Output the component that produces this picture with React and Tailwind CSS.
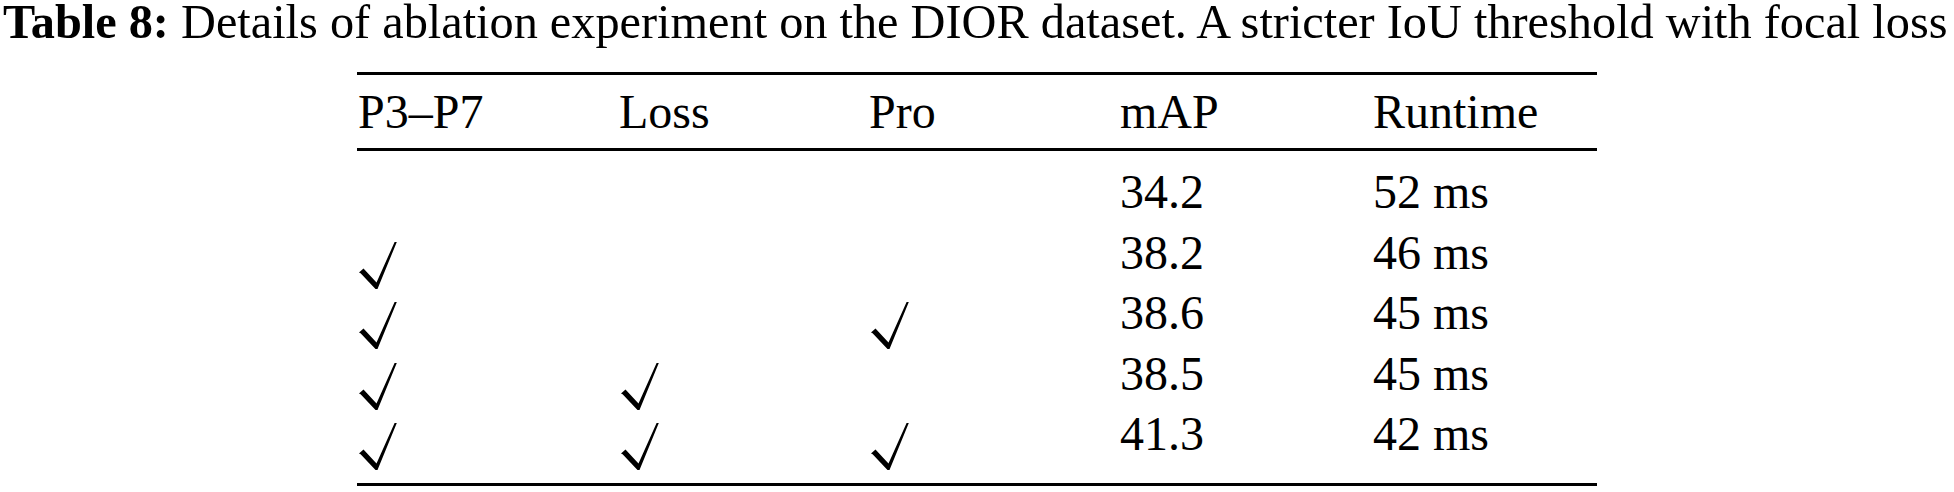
import React from 'react';

const rows = [
  { p37: false, loss: false, pro: false, map: '34.2', runtime: '52 ms' },
  { p37: true, loss: false, pro: false, map: '38.2', runtime: '46 ms' },
  { p37: true, loss: false, pro: true, map: '38.6', runtime: '45 ms' },
  { p37: true, loss: true, pro: false, map: '38.5', runtime: '45 ms' },
  { p37: true, loss: true, pro: true, map: '41.3', runtime: '42 ms' },
];

const cols = 'grid grid-cols-[262px_250px_251px_253px_224px]';

function Check() {
  return (
    <svg width="38" height="47" viewBox="0 0 38 47" className="ml-[2px] mt-[19px] block">
      <path d="M0 30.5 L4.5 26.5 L17.5 40.5 L35.6 0 L37.8 0 L18.5 47 L16.5 47 L1.6 31.2 Z" fill="#000" />
    </svg>
  );
}

function Mark({ on }) {
  return <div className="h-[60.5px]">{on && <Check />}</div>;
}

export default function App() {
  return (
    <div className="w-[1954px] h-[492px] bg-white text-black overflow-hidden font-['Liberation_Serif',_'Times_New_Roman',_serif]">
      <p className="pl-[3px] text-[48.3px] leading-[44px] whitespace-nowrap">
        <span className="font-bold">Table 8:</span> Details of ablation experiment on the DIOR dataset. A stricter IoU threshold with focal loss
      </p>

      <div className="ml-[357px] w-[1240px] mt-[28px] text-[48px]">
        <div className="h-[3px] bg-black" />
        <div className={`${cols} h-[73px] leading-[73px]`}>
          <span className="pl-px">P3–P7</span>
          <span>Loss</span>
          <span>Pro</span>
          <span>mAP</span>
          <span>Runtime</span>
        </div>
        <div className="h-[3px] bg-black" />

        <div className="pt-[11px] pb-[18px]">
          {rows.map((r) => (
            <div key={r.map + r.runtime} className={`${cols} h-[60.5px] leading-[60.5px]`}>
              <Mark on={r.p37} />
              <Mark on={r.loss} />
              <Mark on={r.pro} />
              <span>{r.map}</span>
              <span>{r.runtime}</span>
            </div>
          ))}
        </div>
        <div className="h-[3px] bg-black" />
      </div>
    </div>
  );
}
